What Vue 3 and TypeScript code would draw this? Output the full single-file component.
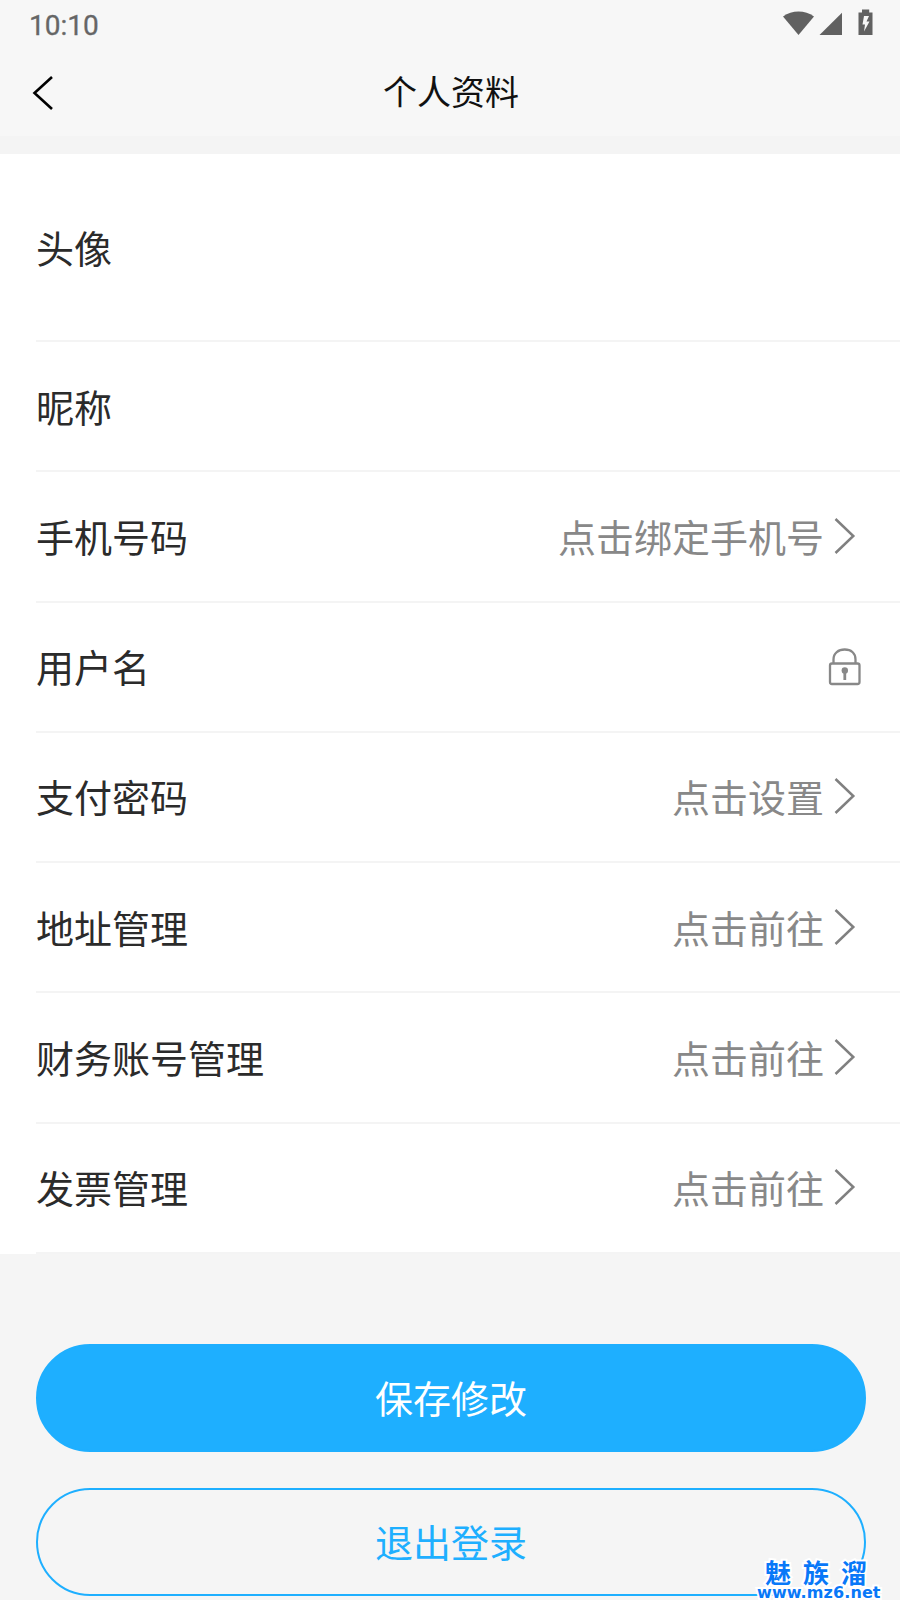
<script setup lang="ts">
type Row = {
  label: string
  action?: string
  tall?: boolean
  locked?: boolean
}

const rows: Row[] = [
  { label: '头像', tall: true },
  { label: '昵称' },
  { label: '手机号码', action: '点击绑定手机号' },
  { label: '用户名', locked: true },
  { label: '支付密码', action: '点击设置' },
  { label: '地址管理', action: '点击前往' },
  { label: '财务账号管理', action: '点击前往' },
  { label: '发票管理', action: '点击前往' },
]
</script>

<template>
  <div class="screen">
    <header class="top">
      <div class="status">
        <span class="clock">10:10</span>
        <svg class="status-icons" width="92" height="28" viewBox="0 0 92 28">
          <path d="M0 5.5 C9 -1.2 22 -1.2 31 5.5 L15.500 24 Z" />
          <path d="M36.500 24 L59 1.8 V24 Z" />
          <path
            fill-rule="evenodd"
            d="M79 -1.5 H86.200 V1.500 H89.500 V24 H75.500 V1.500 H79 Z M81 5 L79.500 13.500 H82 L81 20.500 L86.500 10.500 H83.500 L86 5 Z"
          />
        </svg>
      </div>
      <div class="nav">
        <button class="back" aria-label="返回">
          <svg width="24" height="38" viewBox="0 0 24 38">
            <path d="M20 3 L2.500 19 L20 35" />
          </svg>
        </button>
        <h1 class="title">个人资料</h1>
      </div>
    </header>

    <main class="list">
      <div v-for="row in rows" :key="row.label" class="row" :class="{ tall: row.tall }">
        <span class="label">{{ row.label }}</span>
        <span v-if="row.action" class="action">
          {{ row.action }}
          <svg class="chevron" width="22" height="38" viewBox="0 0 22 38">
            <path d="M1.500 2 L19.300 19 L1.500 36" />
          </svg>
        </span>
        <svg v-if="row.locked" class="lock" width="34" height="38" viewBox="0 0 34 38">
          <rect x="2" y="15.500" width="29.500" height="20.500" rx="2" />
          <path d="M5.500 15 V11.500 C5.500 5 10.500 1.500 16.700 1.500 S27.500 5 27.500 11.500 V15" />
          <circle cx="16.800" cy="22.500" r="3.200" />
          <path class="stem" d="M16.800 23 V32" />
        </svg>
      </div>
    </main>

    <div class="buttons">
      <button class="btn primary">保存修改</button>
      <button class="btn outline">退出登录</button>
    </div>

    <div class="mark">
      <span class="mark-name">魅族溜</span>
      <span class="mark-url">www.mz6.net</span>
    </div>
  </div>
</template>

<style>
body {
  background: #f5f5f5;
}
</style>

<style scoped>
.screen {
  position: relative;
  width: 900px;
  height: 1600px;
  overflow: hidden;
  background: #f5f5f5;
  font-family: 'Noto Sans CJK SC', sans-serif;
}
.top {
  height: 136px;
  background: #f7f7f7;
  border-bottom: 18px solid #f4f4f4;
}
.status {
  height: 48px;
  padding: 0 25px 0 29px;
  display: flex;
  align-items: center;
  justify-content: space-between;
}
.clock {
  padding-top: 4px;
  font: 400 28px/32px Roboto, sans-serif;
  color: #666;
  -webkit-text-stroke: 0.3px #666;
}
.status-icons {
  margin-top: 1px;
  overflow: visible;
  fill: #616161;
}
.nav {
  display: grid;
  grid-template-columns: 120px 1fr 120px;
  align-items: center;
  height: 88px;
}
.back {
  display: flex;
  margin: 2px 0 0;
  padding: 0 0 0 32px;
  border: 0;
  background: none;
}
.back path {
  fill: none;
  stroke: #000;
  stroke-width: 2.6;
}
.title {
  margin: 0 0 2px;
  padding-left: 2px;
  text-align: center;
  font-size: 34px;
  line-height: 50px;
  font-weight: 400;
  color: #111;
}
.list {
  display: flex;
  flex-direction: column;
  height: 1100px;
  padding-left: 36px;
  background: #fff;
}
.row {
  box-sizing: border-box;
  flex: 1;
  display: flex;
  align-items: center;
  justify-content: space-between;
  padding: 0 38px 1px 0;
  border-bottom: 2px solid #f4f4f4;
  font-size: 38px;
  line-height: 56px;
  color: #2b2b2b;
}
.row.tall {
  flex: 0 0 188px;
}
.action {
  display: flex;
  align-items: center;
  gap: 10px;
  padding-right: 6px;
  color: #888;
}
.chevron path {
  fill: none;
  stroke: #808080;
  stroke-width: 2.5;
}
.lock {
  margin-top: 1px;
  fill: none;
  stroke: #888;
  stroke-width: 2.3;
}
.lock circle {
  fill: #888;
  stroke: none;
}
.lock .stem {
  stroke-width: 2.8;
}
.buttons {
  display: flex;
  flex-direction: column;
  gap: 36px;
  padding: 89.500px 34px 0 36px;
}
.btn {
  box-sizing: border-box;
  height: 108.200px;
  padding: 0 0 1px;
  border: 2px solid #1eafff;
  border-radius: 55px;
  font-family: inherit;
  font-size: 38px;
  line-height: 56px;
}
.primary {
  background: #1eafff;
  color: #fff;
}
.outline {
  background: transparent;
  color: #1eafff;
}
.mark {
  position: absolute;
  left: 757px;
  top: 1559px;
  display: flex;
  flex-direction: column;
  color: #0878f8;
  paint-order: stroke fill;
  -webkit-text-stroke: 4px #fff;
  white-space: nowrap;
}
.mark-name {
  padding-left: 8px;
  font-size: 26px;
  line-height: 26px;
  font-weight: 700;
  letter-spacing: 12px;
}
.mark-url {
  font: 700 16px/15px 'DejaVu Sans', sans-serif;
  letter-spacing: 0.1px;
}
</style>
